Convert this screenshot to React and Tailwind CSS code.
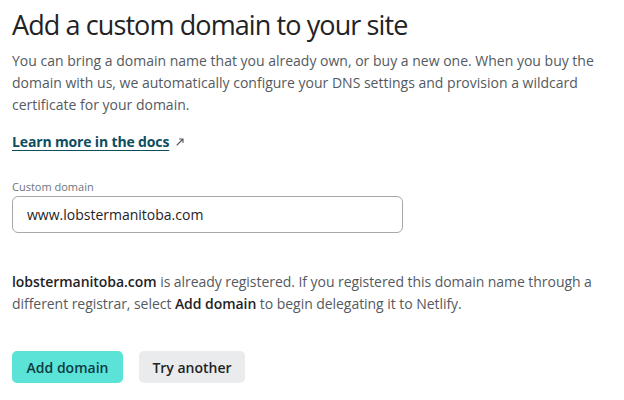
import React, { useState } from 'react';

// Netlify-style "add custom domain" step
const App = () => {
    const [domain, setDomain] = useState('www.lobstermanitoba.com');

    return (
        <div className="w-[624px] h-[400px] bg-white px-3 pt-[7px] font-['Open_Sans',sans-serif] text-[#1f2326]">
            <h1 className="text-[27px] leading-[36px] font-normal tracking-[-0.9px]">Add a custom domain to your site</h1>
            <p className="mt-[7px] text-[14px] leading-[22px] text-[#545a61]">
                You can bring a domain name that you already own, or buy a new one. When you buy the domain with us, we automatically configure your DNS settings and provision a wildcard certificate for your domain.
            </p>

            <div className="mt-[15px] flex items-center gap-[6px]">
                <a href="#" className="text-[14px] leading-[22px] font-bold text-[#0d4d5e] underline underline-offset-[3px] tracking-[-0.15px]">
                    Learn more in the docs
                </a>
                <svg width="10" height="10" viewBox="0 0 10 10" className="text-[#545a61]">
                    <path d="M2 8 L8 2 M4.5 2 H8 V5.5" fill="none" stroke="currentColor" strokeWidth="1.1" strokeLinecap="round" />
                </svg>
            </div>

            <label className="block mt-[26px] text-[11px] leading-[16px] text-[#6e757c]">Custom domain</label>
            <input
                type="text"
                value={domain}
                onChange={(e) => setDomain(e.target.value)}
                className="mt-[1px] block w-[391px] h-[37px] px-[14px] rounded-[6px] border border-[#a3a9ac] text-[14px] text-[#1f2326] outline-none"
            />

            <p className="mt-[38px] text-[14px] leading-[22px] text-[#545a61] tracking-[-0.05px]">
                <span className="font-semibold text-[#1f2326]">lobstermanitoba.com</span> is already registered. If you registered this domain name through a different registrar, select <span className="font-semibold text-[#1f2326]">Add domain</span> to begin delegating it to Netlify.
            </p>

            <div className="mt-[36px] flex gap-4">
                <button className="h-[32px] w-[111px] rounded-[5px] bg-[#5ce3d8] text-[14px] font-semibold text-[#0e3b42]">Add domain</button>
                <button className="h-[32px] w-[106px] rounded-[5px] bg-[#e9ebed] text-[14px] font-semibold text-[#1f2326]">Try another</button>
            </div>
        </div>
    );
};

export default App;
